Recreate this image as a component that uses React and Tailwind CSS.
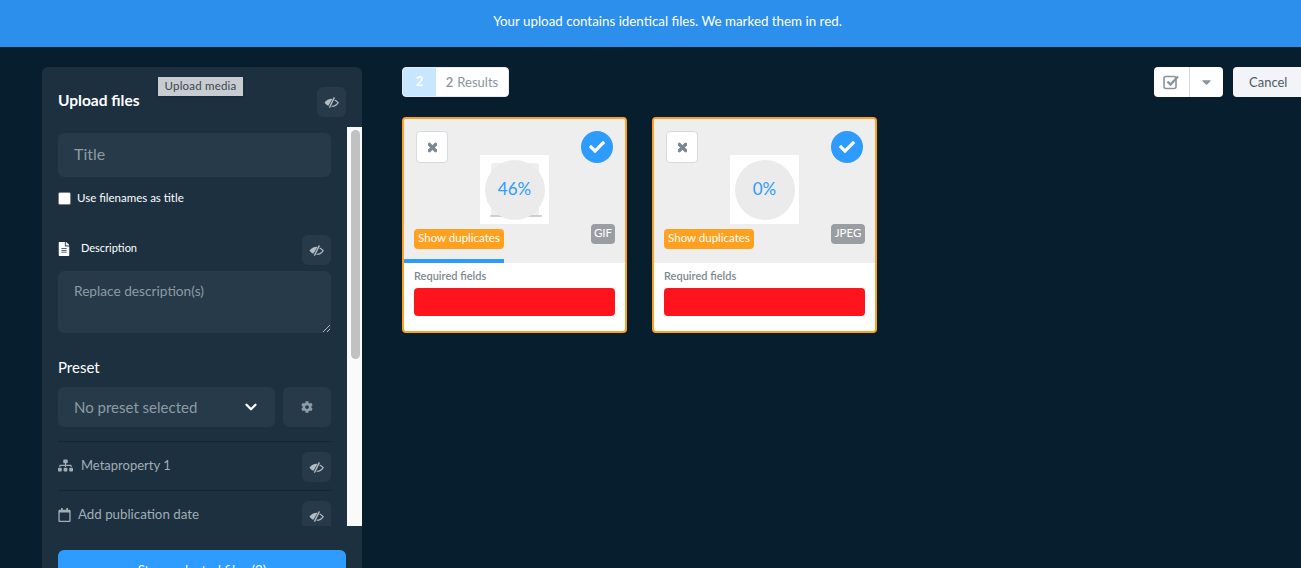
import { FaFileAlt, FaSitemap, FaRegCalendar, FaCog, FaTimes, FaCheck, FaCaretDown } from 'react-icons/fa';
import { ChevronDown } from 'lucide-react';

function EyeSlashIcon() {
    return (
        <svg className="w-[15px] h-[11px]" viewBox="0 0 15 11" fill="none" stroke="currentColor">
            <path d="M8.6 1.7 C5.2 1.4 2.4 3 0.5 5.6 C1.4 7 2.8 8.2 4.4 8.8 Z" fill="currentColor" stroke="none" />
            <path d="M10.4 0.4 L5.4 10.6" strokeWidth="1.3" />
            <path d="M10.6 3 C12 3.7 13.3 4.6 14.2 5.6 C12.8 7.8 10.4 9.4 7.6 9.3" strokeWidth="1.1" />
        </svg>
    );
}

function EyeButton({ className = '' }) {
    return (
        <button className={`w-[29px] h-[30px] bg-[#263a49] rounded-md flex items-center justify-center text-[#b4bcc3] shrink-0 ${className}`}>
            <EyeSlashIcon />
        </button>
    );
}

function Card({ percent, type, typeWidth, progress, faded }) {
    return (
        <div className="w-[225px] h-[216px] bg-white border-2 border-[#ffa01e] rounded-[4px] overflow-hidden flex flex-col">
            <div className="relative h-[140px] bg-[#eeeeee] shrink-0">
                <button className="absolute left-[12px] top-[12px] w-[32px] h-[32px] bg-white border border-[#d5dade] rounded-[4px] flex items-center justify-center text-[#7d878f]">
                    <FaTimes className="w-[9px] h-[13px]" stroke="currentColor" strokeWidth="40" />
                </button>
                <div className="absolute right-[12px] top-[12px] w-[32px] h-[32px] bg-[#2d9bff] rounded-full flex items-center justify-center text-white">
                    <FaCheck className="w-[16px] h-[16px]" />
                </div>
                {/* Thumbnail with progress circle */}
                <div className="absolute left-[76px] top-[36px] w-[69px] h-[69px] bg-white flex items-center justify-center">
                    {faded && (
                        <>
                            <div className="absolute left-[11px] top-[8px] w-[48px] h-[53px] bg-[#efefef] rounded-[3px]"></div>
                            <div className="absolute left-[10px] top-[60px] w-[52px] h-[2px] bg-[#cfcfcf] rounded-full"></div>
                        </>
                    )}
                    <div className="relative w-[60px] h-[60px] rounded-full bg-[#ebebeb] flex items-center justify-center pb-[1px] text-[#2d9bff] text-[17px]">
                        {percent}
                    </div>
                </div>
                <span className="absolute left-[10px] top-[110px] w-[90px] h-[20px] bg-[#ffa01e] rounded-[4px] text-white text-[11.5px] leading-[18px] text-center">
                    Show duplicates
                </span>
                <span className={`absolute right-[10px] top-[105px] h-[20px] bg-[#9a9ea3] rounded-[4px] text-white text-[11.5px] leading-[18px] text-center ${typeWidth}`}>
                    {type}
                </span>
            </div>
            <div className="h-[4px] bg-[#eeeeee] shrink-0">
                <div className="h-full bg-[#2d9bff]" style={{ width: progress }}></div>
            </div>
            <div className="px-[10px] pt-[6px]">
                <p className="text-[11px] leading-[14px] font-semibold text-[#7d878f]">Required fields</p>
                <div className="mt-[5px] h-[28px] bg-[#ff141e] rounded-[4px]"></div>
            </div>
        </div>
    );
}

export default function App() {
    return (
        <div className="h-[568px] overflow-hidden bg-[#071e2e] flex flex-col font-['Lato','Noto_Sans',sans-serif]">
            {/* Top banner */}
            <div className="h-[47px] shrink-0 bg-[#2b8feb] flex items-center justify-center pl-[34px] pb-[4px] text-white text-[13.35px]">
                Your upload contains identical files. We marked them in red.
            </div>

            <div className="flex flex-1 pl-[42px] pt-[20px]">
                {/* Left side: upload panel */}
                <div className="relative w-[320px] h-[520px] shrink-0 bg-[#1c3040] rounded-md">
                    <span className="absolute z-10 left-[116px] top-[10px] w-[85px] h-[19px] bg-[#c8ccd1] text-[#3c4650] text-[11.5px] leading-[18px] text-center tracking-[0.2px] shadow-sm">
                        Upload media
                    </span>
                    <div className="h-[60px] pl-[16px] pr-[16px] flex items-center justify-between">
                        <h2 className="text-[15.5px] font-bold text-white mt-[8px]">Upload files</h2>
                        <EyeButton className="mt-[10px]" />
                    </div>

                    <div className="flex h-[399px]">
                        <div className="w-[305px] pl-[16px] pr-[16px] overflow-hidden">
                            <div className="pt-[6px]">
                                <div className="h-[44px] bg-[#263a49] rounded-md pl-[16px] pb-[2px] flex items-center text-[16px] text-[#8e9aa4]">Title</div>
                                <label className="mt-[12px] h-[17px] flex items-center gap-[6px] text-[11.5px] text-white">
                                    <span className="w-[13px] h-[13px] mt-[2px] bg-white border border-[#7f7f7f] rounded-[2px] shrink-0"></span>
                                    Use filenames as title
                                </label>

                                <div className="mt-[29px] flex items-center justify-between">
                                    <div className="flex items-center gap-[11px] pb-[3px] text-[11px] text-white">
                                        <FaFileAlt className="w-[12px] h-[14px]" />
                                        Description
                                    </div>
                                    <EyeButton />
                                </div>
                                <div className="relative mt-[6px] h-[62px] bg-[#263a49] rounded-md pl-[16px] pt-[10px] text-[13.7px] text-[#8e9aa4]">
                                    Replace description(s)
                                    <svg className="absolute right-[1px] bottom-[1px] w-[7px] h-[7px] text-[#d0d4d8]" viewBox="0 0 7 7" fill="none" stroke="currentColor" strokeWidth="0.8">
                                        <path d="M0 7 L7 0 M4 7 L7 4" />
                                    </svg>
                                </div>

                                <h3 className="mt-[24px] text-[15px] leading-[20px] text-white">Preset</h3>
                                <div className="mt-[10px] flex gap-[8px]">
                                    <div className="flex-1 h-[40px] bg-[#263a49] rounded-md pl-[16px] pr-[15px] flex items-center justify-between text-[15px] text-[#8e9aa4]">
                                        No preset selected
                                        <ChevronDown className="w-[18px] h-[18px] text-white" strokeWidth={3} />
                                    </div>
                                    <button className="w-[48px] h-[40px] bg-[#263a49] rounded-md flex items-center justify-center text-[#8e9aa4]">
                                        <FaCog className="w-[12px] h-[12px]" />
                                    </button>
                                </div>

                                <div className="mt-[14px] border-t border-[#152735] h-[49px] flex items-center justify-between pt-[2px]">
                                    <div className="flex items-center gap-[8px] pb-[3px] text-[13px] text-[#a3adb5]">
                                        <FaSitemap className="w-[15px] h-[13px]" />
                                        Metaproperty 1
                                    </div>
                                    <EyeButton />
                                </div>
                                <div className="border-t border-[#152735] h-[49px] flex items-center justify-between pt-[2px]">
                                    <div className="flex items-center gap-[7px] pb-[3px] text-[13.3px] text-[#a3adb5]">
                                        <FaRegCalendar className="w-[13px] h-[14px]" />
                                        Add publication date
                                    </div>
                                    <EyeButton />
                                </div>
                            </div>
                        </div>
                        {/* Scrollbar */}
                        <div className="w-[15px] bg-[#fafafa] pl-[4px] pr-[2px] pt-[3px]">
                            <div className="h-[229px] bg-[#c1c1c1] rounded-full"></div>
                        </div>
                    </div>

                    <div className="pl-[16px] pr-[16px] pt-[24px]">
                        <button className="w-full h-[40px] bg-[#2d9bff] rounded-md text-white text-[13.4px]">
                            Store selected files (2)
                        </button>
                    </div>
                </div>

                {/* Right side: results */}
                <div className="flex-1 min-w-0 pl-[40px]">
                    <div className="h-[30px] flex items-center justify-between">
                        <div className="flex h-[30px] w-[107px] rounded-[4px] overflow-hidden border border-[#e8ebee] bg-white">
                            <span className="w-[33px] bg-[#c8e6ff] text-white text-[13px] font-bold flex items-center justify-center">2</span>
                            <span className="flex-1 pt-[1px] text-[#8a949c] text-[13px] flex items-center justify-center"><b className="font-semibold mr-[4px]">2</b>Results</span>
                        </div>
                        <div className="flex items-center gap-[10px] -mr-[8px]">
                            <div className="flex h-[30px] w-[69px] bg-white rounded-[4px]">
                                <span className="w-[36px] border-r border-[#d5dade] flex items-center justify-center text-[#8a949c]">
                                    <svg className="w-[17px] h-[16px]" viewBox="0 0 17 16" fill="none" stroke="currentColor">
                                        <rect x="1" y="2.5" width="12" height="12" rx="2" strokeWidth="1.6" />
                                        <path d="M4.5 7.5 L7.5 10.5 L15 2.5" strokeWidth="2.4" />
                                    </svg>
                                </span>
                                <span className="flex-1 flex items-center justify-center text-[#8a949c]">
                                    <FaCaretDown className="w-[9px] h-[14px]" />
                                </span>
                            </div>
                            <button className="w-[76px] h-[30px] bg-[#f2f4f7] rounded-[4px] pl-[16px] pt-[1px] text-left text-[#4f5a65] text-[13px]">Cancel</button>
                        </div>
                    </div>
                    <div className="mt-[20px] flex gap-[25px]">
                        <Card percent="46%" type="GIF" typeWidth="w-[24px]" progress="100px" faded />
                        <Card percent="0%" type="JPEG" typeWidth="w-[34px]" progress="0px" />
                    </div>
                </div>
            </div>
        </div>
    );
}
